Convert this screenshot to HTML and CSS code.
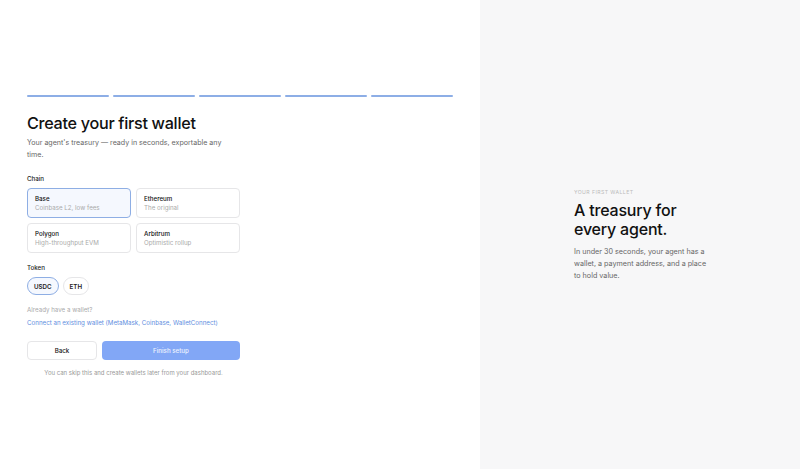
FILE: index.html
```html
<!DOCTYPE html>
<html lang="en">
<head>
  <meta charset="UTF-8" />
  <title>Create your first wallet</title>
  <link rel="stylesheet" href="styles.css">
</head>
<body>
  <div class="layout">
    <main class="left">
      <div class="steps">
        <span class="step"></span>
        <span class="step"></span>
        <span class="step"></span>
        <span class="step"></span>
        <span class="step"></span>
      </div>
      <div class="form">
        <h1 class="title">Create your first wallet</h1>
        <p class="subtitle">Your agent's treasury — ready in seconds, exportable any time.</p>

        <div class="field-label">Chain</div>
        <div class="chains">
          <div class="chain selected">
            <div class="chain-name">Base</div>
            <div class="chain-desc">Coinbase L2, low fees</div>
          </div>
          <div class="chain">
            <div class="chain-name">Ethereum</div>
            <div class="chain-desc">The original</div>
          </div>
          <div class="chain">
            <div class="chain-name">Polygon</div>
            <div class="chain-desc">High-throughput EVM</div>
          </div>
          <div class="chain">
            <div class="chain-name">Arbitrum</div>
            <div class="chain-desc">Optimistic rollup</div>
          </div>
        </div>

        <div class="field-label token-label">Token</div>
        <div class="tokens">
          <button class="pill selected">USDC</button>
          <button class="pill">ETH</button>
        </div>

        <p class="hint">Already have a wallet?</p>
        <a class="link" href="#">Connect an existing wallet (MetaMask, Coinbase, WalletConnect)</a>

        <div class="actions">
          <button class="btn btn-back">Back</button>
          <button class="btn btn-primary">Finish setup</button>
        </div>
        <p class="footnote">You can skip this and create wallets later from your dashboard.</p>
      </div>
    </main>
    <aside class="right">
      <div class="aside-inner">
        <div class="eyebrow">YOUR FIRST WALLET</div>
        <h2 class="aside-title">A treasury for every agent.</h2>
        <p class="aside-text">In under 30 seconds, your agent has a wallet, a payment address, and a place to hold value.</p>
      </div>
    </aside>
  </div>
</body>
</html>
```

FILE: styles.css
```css
* {
  padding: 0;
  margin: 0;
  box-sizing: border-box;
  font-family: Inter, "Liberation Sans", sans-serif;
}

body {
  background: #fff;
  color: #111;
}

.layout {
  display: flex;
  height: 469px;
}

.left {
  width: 480px;
  padding: 2px 27px 0;
  display: flex;
  flex-direction: column;
  justify-content: center;
}

.steps {
  display: flex;
  gap: 4px;
  margin-bottom: 15px;
}

.step {
  flex: 1;
  height: 2px;
  background: #8daee6;
  border-radius: 1px;
}

.form {
  width: 213px;
  display: flex;
  flex-direction: column;
}

.title {
  font-size: 16.2px;
  font-weight: 500;
  letter-spacing: -0.3px;
  line-height: 22px;
  color: #111;
}

.subtitle {
  max-width: 200px;
  margin-top: 3px;
  font-size: 7.1px;
  line-height: 12px;
  color: #666;
}

.field-label {
  margin-top: 14px;
  font-size: 6.2px;
  font-weight: 500;
  color: #222;
}

.chains {
  margin-top: 6px;
  display: grid;
  grid-template-columns: 1fr 1fr;
  gap: 5px;
}

.chain {
  height: 30px;
  padding: 6px 7px;
  border: 1px solid #e6e6e8;
  border-radius: 4px;
  display: flex;
  flex-direction: column;
  gap: 2px;
}

.chain.selected {
  border-color: #8eaee4;
  background: #f5f8fe;
}

.chain-name {
  font-size: 6.2px;
  font-weight: 500;
  color: #111;
}

.chain-desc {
  font-size: 6.2px;
  color: #aaa;
}

.token-label {
  margin-top: 11px;
}

.tokens {
  margin-top: 6px;
  display: flex;
  gap: 4px;
}

.pill {
  height: 18px;
  padding: 0 6px;
  border: 1px solid #e6e6e8;
  border-radius: 9px;
  background: #fff;
  font-size: 6.2px;
  font-weight: 600;
  color: #222;
}

.pill.selected {
  border-color: #8eaee4;
  background: #f5f8fe;
}

.hint {
  margin-top: 11px;
  font-size: 6.2px;
  color: #aaa;
}

.link {
  margin-top: 6px;
  font-size: 6.2px;
  color: #5e8ee0;
  text-decoration: none;
}

.actions {
  margin-top: 15px;
  display: flex;
  gap: 5px;
}

.btn {
  height: 19px;
  border-radius: 4px;
  font-size: 6.2px;
  font-weight: 500;
}

.btn-back {
  width: 70px;
  border: 1px solid #e6e6e8;
  background: #fff;
  color: #111;
}

.btn-primary {
  flex: 1;
  border: 0;
  background: #82a7f6;
  color: #eef3fe;
}

.footnote {
  margin-top: 9px;
  text-align: center;
  font-size: 6px;
  color: #999;
}

.right {
  flex: 1;
  background: #f7f7f8;
  display: flex;
  align-items: center;
  padding-left: 94px;
}

.aside-inner {
  width: 140px;
  margin-top: 1px;
}

.eyebrow {
  font-size: 5.2px;
  letter-spacing: 0.4px;
  color: #bbb;
}

.aside-title {
  margin-top: 6px;
  font-size: 16px;
  font-weight: 500;
  line-height: 19px;
  letter-spacing: -0.2px;
  color: #111;
}

.aside-text {
  margin-top: 7px;
  font-size: 7.2px;
  line-height: 12px;
  color: #666;
}
```
